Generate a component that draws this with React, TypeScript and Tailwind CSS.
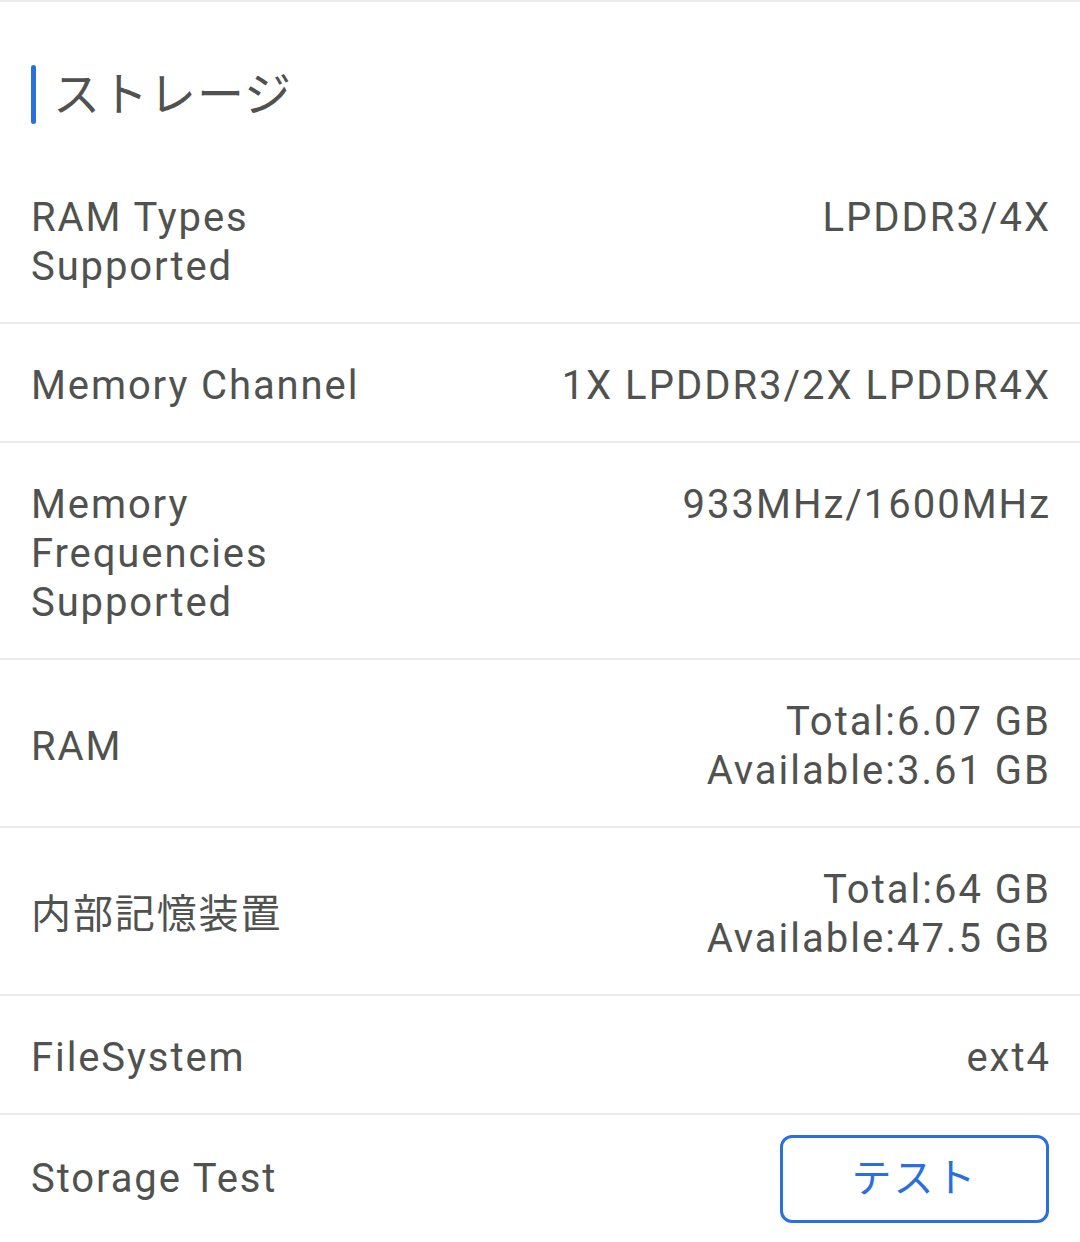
const rows: { label: string[]; value: string[] }[] = [
  { label: ['RAM Types', 'Supported'], value: ['LPDDR3/4X'] },
  { label: ['Memory Channel'], value: ['1X LPDDR3/2X LPDDR4X'] },
  { label: ['Memory', 'Frequencies', 'Supported'], value: ['933MHz/1600MHz'] },
  { label: ['RAM'], value: ['Total:6.07 GB', 'Available:3.61 GB'] },
  { label: ['内部記憶装置'], value: ['Total:64 GB', 'Available:47.5 GB'] },
  { label: ['FileSystem'], value: ['ext4'] },
];

export default function App() {
  return (
    <div className={PageClassName} style={{ fontFamily: FontStack }}>
      <div className="flex h-[154px] items-start pl-[31px] pt-[63px]">
        <div className="h-[59px] w-[5px] rounded-full bg-[#2a6fe0]" />
        <h2 className="ml-[17px] mt-[6px] text-[47px] leading-none tracking-[1px] text-[#505250]">
          ストレージ
        </h2>
      </div>
      {rows.map((row, i) => (
        <InfoRow key={i} label={row.label} value={row.value} />
      ))}
      <div className="flex h-[127px] items-center justify-between px-[31px]">
        <span className={LabelClassName}>Storage Test</span>
        <button className="flex h-[88px] w-[269px] items-center justify-center rounded-[12px] border-[3px] border-[#2a6fe0] text-[40px] tracking-[2px] text-[#2a6fe0]">
          テスト
        </button>
      </div>
    </div>
  );
}

const InfoRow = ({ label, value }: { label: string[]; value: string[] }) => {
  return (
    <div className="flex border-b-2 border-[#ebebeb] px-[31px] pb-[31px] pt-[37px]">
      <div className={`w-[340px] self-center ${LabelClassName}`}>
        {label.map((l) => (
          <div key={l}>{l}</div>
        ))}
      </div>
      <div className={`-mr-[2px] flex-1 self-start text-right ${ValueClassName}`}>
        {value.map((v) => (
          <div key={v}>{v}</div>
        ))}
      </div>
    </div>
  );
};

const FontStack = 'Roboto, "Noto Sans CJK JP", sans-serif';
const PageClassName = 'h-[1242px] w-[1080px] overflow-hidden border-t-2 border-[#ebebeb] bg-white';
const LabelClassName = 'text-[40px] leading-[49px] tracking-[1.9px] text-[#505250]';
const ValueClassName = 'text-[40px] leading-[49px] tracking-[2px] text-[#505250]';
